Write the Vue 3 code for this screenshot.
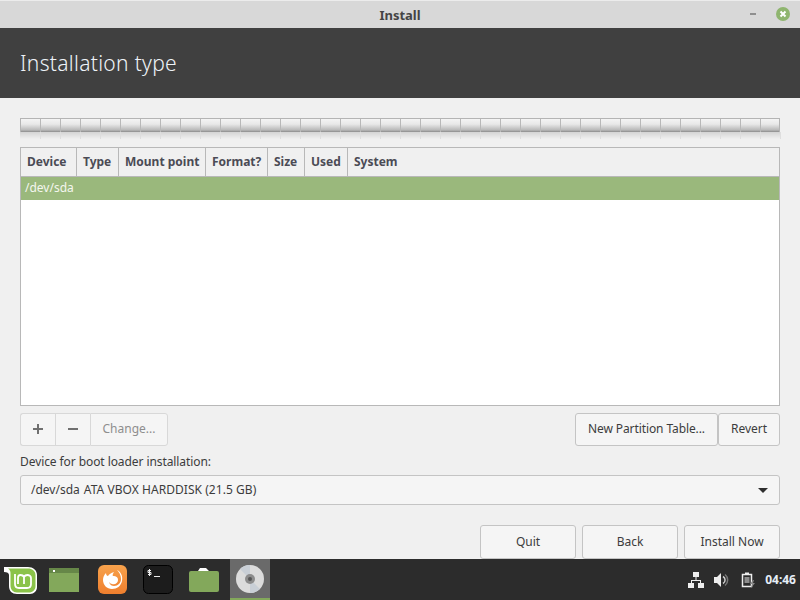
<script setup>
const columns = [
  { label: 'Device', width: 56 },
  { label: 'Type', width: 42 },
  { label: 'Mount point', width: 87 },
  { label: 'Format?', width: 62 },
  { label: 'Size', width: 37 },
  { label: 'Used', width: 43 },
  { label: 'System', width: 0 },
];
const ticks = Array.from({ length: 38 });
</script>

<template>
  <div class="screen">
    <div class="titlebar">
      <span class="title">Install</span>
      <span class="minimize"></span>
      <svg class="close" width="14" height="14" viewBox="0 0 14 14">
        <circle cx="7" cy="7" r="7" fill="#8fb56f" />
        <path d="M4.500 4.500l5 5M9.500 4.500l-5 5" stroke="#fff" stroke-width="2" />
      </svg>
    </div>
    <div class="banner">Installation type</div>

    <div class="content">
      <div class="gauge">
        <div class="gauge-bar">
          <span v-for="(t, i) in ticks" :key="i" class="tick"></span>
        </div>
        <div class="gauge-shine">
          <span v-for="(t, i) in ticks" :key="i" class="tick-shine"></span>
        </div>
      </div>

      <div class="table">
        <div class="thead">
          <div
            v-for="c in columns"
            :key="c.label"
            class="th"
            :style="c.width ? { width: c.width + 'px' } : { flex: 1, border: 0 }"
          >{{ c.label }}</div>
        </div>
        <div class="row">/dev/sda</div>
      </div>

      <div class="tools">
        <div class="group">
          <button class="btn icon-btn">
            <svg width="12" height="12" viewBox="0 0 12 12"><path d="M6 1v10M1 6h10" stroke="#707070" stroke-width="2" /></svg>
          </button>
          <button class="btn icon-btn">
            <svg width="12" height="12" viewBox="0 0 12 12"><path d="M1 6h10" stroke="#707070" stroke-width="2" /></svg>
          </button>
          <button class="btn change">Change...</button>
        </div>
        <div class="group">
          <button class="btn table-btn">New Partition Table...</button>
          <button class="btn revert">Revert</button>
        </div>
      </div>

      <div class="boot-label">Device for boot loader installation:</div>
      <div class="combo">
        <span class="combo-text">/dev/sda<span class="model">ATA VBOX HARDDISK (21.5 GB)</span></span>
        <span class="arrow"></span>
      </div>

      <div class="actions">
        <button class="btn action">Quit</button>
        <button class="btn action">Back</button>
        <button class="btn action">Install Now</button>
      </div>
    </div>

    <div class="taskbar">
      <div class="launchers">
        <svg class="mint" width="33" height="28" viewBox="0 0 33 28">
          <path d="M0 1h24c5 0 9 3 9 8v12c0 4-3 7-7 7H13c-5 0-8-3-8-8V9C5 7 3 6 0 6z" fill="#fff" />
          <path d="M4 2.500h20c4 0 7.500 2.500 7.500 6.500v11c0 4-3 6.500-6.500 6.500H13c-4 0-6.500-3-6.500-7V8C6.500 5 6 4 4 2.500z" fill="#8bc34a" />
          <path d="M11 8v10c0 3 2 4 4 4h8c3 0 4-2 4-4v-6c0-2-2-3-3.500-3S20.500 10 20 11c-.5-1-2-2-3.500-2S14 10 14 12v6M20 11v7" fill="none" stroke="#fff" stroke-width="1.800" />
        </svg>
        <svg class="app app-window" width="30" height="24" viewBox="0 0 30 24">
          <rect width="30" height="24" fill="#83a85b" />
          <rect width="30" height="5" fill="#668748" />
          <rect x="4" y="2" width="2" height="2" fill="#fff" />
        </svg>
        <svg class="app app-fox" width="29" height="29" viewBox="0 0 29 29">
          <defs>
            <linearGradient id="fox" x1="0" y1="0" x2="0" y2="1">
              <stop offset="0" stop-color="#f7a24c" />
              <stop offset="1" stop-color="#ef7f2e" />
            </linearGradient>
          </defs>
          <rect width="29" height="29" rx="6" fill="url(#fox)" />
          <path d="M19 5c4 2 6 6 5 11-1 5-5 8-10 8-5 0-9-4-9-9 0-3 1-5 3-7 0 2 1 3 2 3 1-2 3-3 6-4-1 2-2 3-1 4 3 0 5 1 5 4 0 3-3 5-6 4-1 0-2-1-3-2 1 3 3 4 5 4 4 0 7-3 7-7 0-4-2-7-4-9z" fill="#fff" />
        </svg>
        <svg class="app app-term" width="30" height="29" viewBox="0 0 30 29">
          <rect x="0.500" y="0.500" width="29" height="28" rx="5" fill="#1c1c1c" stroke="#000" />
          <path d="M8 5.500H5v2h3v2H5M6.500 4v7" fill="none" stroke="#eee" stroke-width="1" />
          <path d="M11 11.500h6" stroke="#eee" stroke-width="1" />
        </svg>
        <svg class="app app-folder" width="30" height="24" viewBox="0 0 30 24">
          <path d="M3 3h6l2-3h6l3 3z" fill="#fff" />
          <rect y="3" width="30" height="21" rx="2" fill="#83a85b" />
        </svg>
        <div class="launcher-active">
          <svg width="28" height="28" viewBox="0 0 28 28">
            <circle cx="14" cy="14" r="14" fill="#dcdcdc" />
            <path d="M14 14L4 4a14 14 0 0 1 10-4zM14 14l10 10a14 14 0 0 1-10 4z" fill="#c9cfd6" />
            <circle cx="14" cy="14" r="5" fill="#8c8c8c" />
            <circle cx="14" cy="14" r="2" fill="#555" />
          </svg>
        </div>
      </div>

      <div class="tray">
        <svg width="16" height="16" viewBox="0 0 16 16" fill="#eee">
          <rect x="5" y="0" width="6" height="5" />
          <rect x="0" y="11" width="6" height="5" />
          <rect x="10" y="11" width="6" height="5" />
          <path d="M7.500 5h1v3H13v3h-1V9H4v2H3V8h4.500z" />
        </svg>
        <svg width="16" height="16" viewBox="0 0 16 16">
          <path d="M0 5h3l4-4v14l-4-4H0z" fill="#eee" />
          <path d="M9 4.500a4 4 0 0 1 0 7" fill="none" stroke="#ccc" stroke-width="1.500" />
          <path d="M11 2.500a7 7 0 0 1 0 11" fill="none" stroke="#777" stroke-width="1.500" />
        </svg>
        <svg class="battery" width="16" height="16" viewBox="0 0 16 16">
          <path d="M1.500 2.500h9v12h-9z" fill="none" stroke="#eee" stroke-width="1.500" />
          <rect x="4" y="0.500" width="4" height="2.500" fill="#eee" />
          <path d="M3.500 6h5M3.500 8h5M3.500 10h5" stroke="#eee" />
          <path d="M12 8l-3 4h2l-1 4 4-5h-2l1-3z" fill="#888" />
        </svg>
        <span class="clock">04:46</span>
      </div>
    </div>
  </div>
</template>

<style scoped>
.screen {
  width: 800px;
  height: 600px;
  display: flex;
  flex-direction: column;
  overflow: hidden;
  background: #f0f0f0;
  font-family: "Noto Sans", sans-serif;
  font-size: 12px;
  color: #3c3c3c;
}

.titlebar {
  height: 28px;
  flex: none;
  position: relative;
  display: flex;
  align-items: center;
  justify-content: center;
  background: #d8d8d8;
  border-top: 1px solid #ececec;
  box-sizing: border-box;
}

.title {
  font-weight: 700;
  font-size: 13px;
  color: #444;
}

.minimize {
  position: absolute;
  left: 750px;
  top: 12px;
  width: 6px;
  height: 2px;
  background: #8f8f8f;
}

.close {
  position: absolute;
  left: 776px;
  top: 6px;
}

.banner {
  height: 70px;
  flex: none;
  display: flex;
  align-items: center;
  padding-left: 20px;
  background: #404040;
  color: #eef3f8;
  font-size: 21px;
  font-weight: 300;
  letter-spacing: 0.3px;
}

.content {
  flex: 1;
  min-height: 0;
  display: flex;
  flex-direction: column;
  padding: 20px 20px 0;
}

.gauge {
  height: 29px;
  flex: none;
}

.gauge-bar {
  height: 13px;
  display: flex;
  overflow: hidden;
  border: 1px solid #b4b4b4;
  border-bottom: 0;
  background: linear-gradient(#f4f4f4, #e8e8e8 40%, #b8b8b8 85%, #8c8c8c);
}

.tick {
  width: 20px;
  flex: none;
  box-sizing: border-box;
  border-right: 1px solid #b8b8b8;
}

.gauge-shine {
  height: 7px;
  display: flex;
  padding-left: 1px;
  background: linear-gradient(#d4d4d4, #f0f0f0);
}

.tick-shine {
  width: 20px;
  flex: none;
  box-sizing: border-box;
  border-right: 1px solid #dedede;
}

.table {
  height: 259px;
  flex: none;
  box-sizing: border-box;
  border: 1px solid #b8b8b8;
  background: #fff;
}

.thead {
  height: 29px;
  display: flex;
  box-sizing: border-box;
  background: #f0f0f0;
  border-bottom: 1px solid #b8b8b8;
}

.th {
  flex: none;
  box-sizing: border-box;
  padding: 0 6px;
  line-height: 27px;
  font-weight: 700;
  font-size: 12px;
  color: #4b4b55;
  border-right: 1px solid #b8b8b8;
  white-space: nowrap;
}

.row {
  height: 23px;
  line-height: 22px;
  padding-left: 4px;
  background: #9ab87c;
  color: #f4f6ef;
  font-size: 12px;
}

.tools {
  display: flex;
  justify-content: space-between;
  margin-top: 7px;
  height: 33px;
  flex: none;
}

.group {
  display: flex;
}

.btn {
  box-sizing: border-box;
  margin: 0;
  padding: 0 0 2px;
  font: inherit;
  color: #3c3c3c;
  background: #f5f5f5;
  border: 1px solid #c4c4c4;
  border-radius: 3px;
}

.icon-btn {
  width: 35px;
  display: flex;
  align-items: center;
  justify-content: center;
  border-color: #d8d8d8;
  border-right: 0;
  border-radius: 0;
}

.icon-btn:first-child {
  border-radius: 3px 0 0 3px;
}

.change {
  width: 78px;
  color: #8e8e8e;
  border-color: #d8d8d8;
  border-radius: 0 3px 3px 0;
}

.table-btn {
  width: 143px;
  letter-spacing: -0.1px;
}

.revert {
  width: 62px;
}

.boot-label {
  margin-top: 7px;
  height: 17px;
  line-height: 17px;
  letter-spacing: -0.08px;
}

.combo {
  margin-top: 5px;
  height: 30px;
  flex: none;
  box-sizing: border-box;
  display: flex;
  align-items: center;
  justify-content: space-between;
  padding: 0 11px 2px 10px;
  background: #f5f5f5;
  border: 1px solid #c4c4c4;
  border-radius: 3px;
}

.model {
  margin-left: 4px;
  letter-spacing: 0.05px;
}

.arrow {
  width: 0;
  height: 0;
  margin-top: 2px;
  border-left: 5px solid transparent;
  border-right: 5px solid transparent;
  border-top: 5px solid #2e2e2e;
}

.actions {
  display: flex;
  justify-content: flex-end;
  gap: 6px;
  margin-top: 20px;
  height: 34px;
  flex: none;
}

.action {
  width: 96px;
}

.taskbar {
  height: 41px;
  flex: none;
  display: flex;
  align-items: center;
  justify-content: space-between;
  background: #2c2c2c;
}

.launchers {
  display: flex;
  align-items: center;
  height: 100%;
}

.mint {
  margin-left: 4px;
  flex: none;
}

.app {
  flex: none;
}

.app-window {
  margin-left: 12px;
}

.app-fox {
  margin-left: 19px;
}

.app-term {
  margin-left: 16px;
}

.app-folder {
  margin-left: 16px;
}

.launcher-active {
  width: 40px;
  height: 100%;
  margin-left: 11px;
  box-sizing: border-box;
  display: flex;
  align-items: center;
  justify-content: center;
  background: #6a6a6a;
  border-bottom: 2px solid #83a85b;
}

.tray {
  display: flex;
  align-items: center;
  gap: 10px;
  padding-right: 4px;
}

.battery {
  margin-left: 1px;
}

.clock {
  font-weight: 700;
  font-size: 12px;
  color: #e6eef7;
  margin-left: -2px;
}
</style>

<style>
html, body {
  margin: 0;
}
</style>
